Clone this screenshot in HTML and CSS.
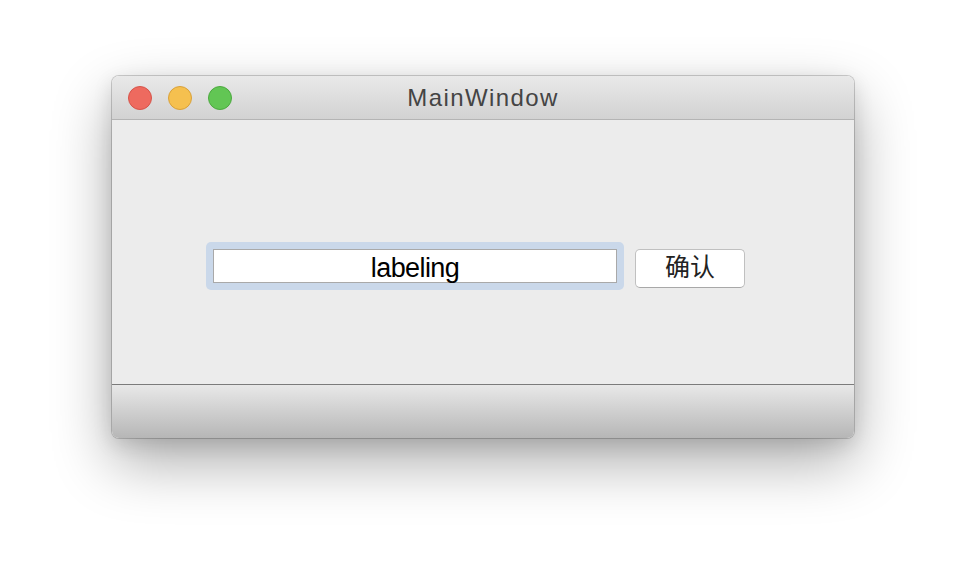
FILE: index.html
```html
<!DOCTYPE html>
<html>
<head>
<meta charset="utf-8">
<link rel="stylesheet" href="styles.css">
</head>
<body>
<div class="window">
  <div class="titlebar">
    <div class="lights">
      <span class="light red"></span>
      <span class="light yellow"></span>
      <span class="light green"></span>
    </div>
    <div class="title">MainWindow</div>
  </div>
  <div class="content">
    <div class="ring"><div class="field">labeling</div></div>
    <div class="button">确认</div>
  </div>
  <div class="statusbar"></div>
</div>
</body>
</html>
```
FILE: styles.css
```css
html, body {
  margin: 0;
  padding: 0;
  background: #ffffff;
  width: 966px;
  height: 586px;
  overflow: hidden;
  font-family: "Liberation Sans", "Noto Sans CJK SC", sans-serif;
}
body {
  padding-top: 76px;
  padding-left: 112px;
  box-sizing: border-box;
}
.window {
  width: 742px;
  height: 362px;
  border-radius: 7px;
  overflow: hidden;
  display: flex;
  flex-direction: column;
  box-shadow: 0 0 0 1px rgba(0,0,0,0.18), 0 24px 60px rgba(0,0,0,0.33), 0 6px 20px rgba(0,0,0,0.12);
}
.titlebar {
  height: 43px;
  flex: none;
  background: linear-gradient(#e9e9e9, #d2d2d2);
  border-bottom: 1px solid #b4b4b4;
  display: flex;
  align-items: center;
  position: relative;
}
.lights {
  display: flex;
  gap: 16px;
  padding-left: 16px;
  padding-top: 1px;
}
.light {
  width: 24px;
  height: 24px;
  border-radius: 50%;
  box-sizing: border-box;
}
.red { background: #ee6a5f; border: 1px solid #d6544a; }
.yellow { background: #f5c04f; border: 1px solid #d9a13a; }
.green { background: #62c654; border: 1px solid #4ca93f; }
.title {
  position: absolute;
  left: 0;
  right: 0;
  top: 0;
  bottom: 0;
  display: flex;
  align-items: center;
  justify-content: center;
  font-size: 24px;
  letter-spacing: 1.4px;
  color: #444;
  pointer-events: none;
}
.content {
  flex: 1;
  background: #ececec;
  display: flex;
  align-items: flex-start;
  padding: 122px 0 0 94px;
  gap: 11px;
  border-bottom: 1px solid #7b7b7b;
}
.ring {
  background: #cad8ea;
  border-radius: 5px;
  padding: 7px;
}
.field {
  width: 404px;
  height: 34px;
  box-sizing: border-box;
  background: #ffffff;
  border: 1px solid #a9a9a9;
  display: flex;
  align-items: center;
  justify-content: center;
  font-size: 27px;
  letter-spacing: -0.6px;
  color: #000;
  padding-top: 5px;
}
.button {
  margin-top: 7px;
  width: 110px;
  height: 39px;
  box-sizing: border-box;
  background: #ffffff;
  border: 1px solid #c0c0c0;
  border-bottom-color: #a8a8a8;
  border-radius: 5px;
  display: flex;
  align-items: center;
  justify-content: center;
  font-size: 25px;
  color: #222;
  padding-bottom: 7px;
  font-family: "Noto Sans CJK SC", sans-serif;
}
.statusbar {
  height: 53px;
  flex: none;
  background: linear-gradient(#e8e8e8, #b6b6b6);
}
```
